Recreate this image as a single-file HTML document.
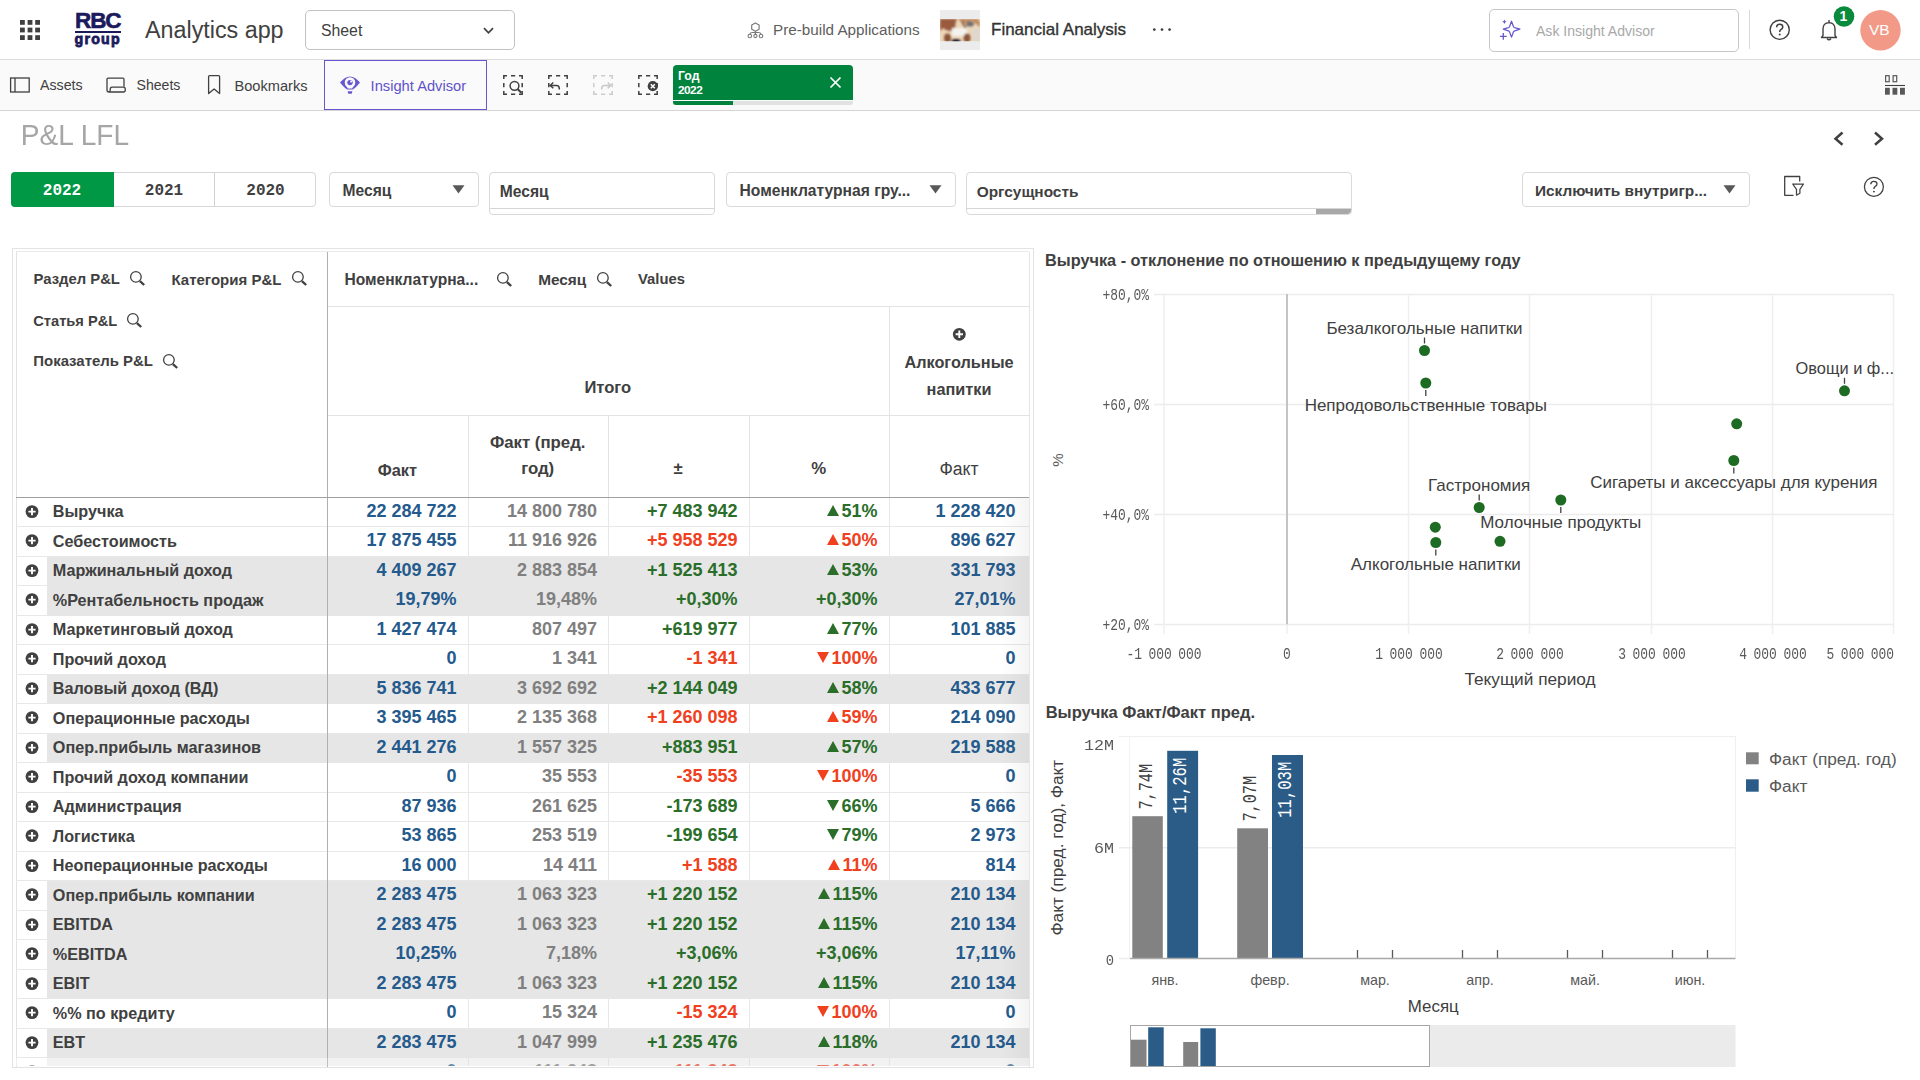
<!DOCTYPE html><html><head><meta charset="utf-8"><title>P&amp;L LFL</title><style>
*{margin:0;padding:0;box-sizing:border-box}
html,body{width:1920px;height:1080px;overflow:hidden;background:#fff;font-family:"Liberation Sans",sans-serif;color:#404040}
.ab{position:absolute}
.t{position:absolute;white-space:nowrap;line-height:1}
svg{position:absolute;overflow:visible}
.tu{display:inline-block;width:0;height:0;border-left:6px solid transparent;border-right:6px solid transparent;border-bottom:11.5px solid;margin-right:2.5px;vertical-align:1px}
.td{display:inline-block;width:0;height:0;border-left:6px solid transparent;border-right:6px solid transparent;border-top:11.5px solid;margin-right:2.5px;vertical-align:1px}
</style></head><body>
<div class="ab" style="left:0px;top:59px;width:1920px;height:1px;background:#dcdcdc"></div>
<svg style="left:0px;top:0px;" width="60" height="60" viewBox="0 0 60 60"><rect x="20.0" y="20.0" width="4.8" height="4.8" fill="#404040"/><rect x="27.6" y="20.0" width="4.8" height="4.8" fill="#404040"/><rect x="35.2" y="20.0" width="4.8" height="4.8" fill="#404040"/><rect x="20.0" y="27.6" width="4.8" height="4.8" fill="#404040"/><rect x="27.6" y="27.6" width="4.8" height="4.8" fill="#404040"/><rect x="35.2" y="27.6" width="4.8" height="4.8" fill="#404040"/><rect x="20.0" y="35.2" width="4.8" height="4.8" fill="#404040"/><rect x="27.6" y="35.2" width="4.8" height="4.8" fill="#404040"/><rect x="35.2" y="35.2" width="4.8" height="4.8" fill="#404040"/></svg>
<div class="t" style="left:75px;top:9.75px;font-size:22.5px;font-weight:bold;color:#1b1a5c;letter-spacing:-1.1px;-webkit-text-stroke:0.6px #1b1a5c">RBC</div>
<div class="ab" style="left:74.5px;top:31.2px;width:46.5px;height:1.7px;background:#1b1a5c"></div>
<div class="t" style="left:74.6px;top:31.98px;font-size:14.2px;font-weight:bold;color:#1b1a5c;letter-spacing:1.2px;-webkit-text-stroke:0.8px #1b1a5c">group</div>
<div class="t" style="left:145px;top:19.27px;font-size:23.3px;color:#404040">Analytics app</div>
<div class="ab" style="left:305px;top:10px;width:210px;height:40px;border:1px solid #c2c2c2;border-radius:5px;background:#fff"></div>
<div class="t" style="left:321px;top:22.52px;font-size:15.8px;color:#404040">Sheet</div>
<svg style="left:483px;top:27px;" width="12" height="8" viewBox="0 0 12 8"><path d="M1 1.2 L5.5 5.8 L10 1.2" fill="none" stroke="#404040" stroke-width="1.7"/></svg>
<svg style="left:742px;top:18px;" width="26" height="24" viewBox="0 0 26 24"><path d="M13.4 4.9 L17.1 7 V11.2 L13.4 13.3 L9.7 11.2 V7Z" fill="none" stroke="#7a7a7a" stroke-width="1.2" stroke-linejoin="round"/><path d="M13.4 13.3 V16.2 M7.8 16.3 Q8.3 14.5 10.3 14.5 H16.5 Q18.5 14.5 19 16.3" fill="none" stroke="#7a7a7a" stroke-width="1.2"/><circle cx="7.8" cy="18" r="1.75" fill="none" stroke="#7a7a7a" stroke-width="1.1"/><circle cx="13.4" cy="18" r="1.6" fill="none" stroke="#7a7a7a" stroke-width="1.1"/><circle cx="19" cy="18" r="1.75" fill="none" stroke="#7a7a7a" stroke-width="1.1"/></svg>
<div class="t" style="left:773px;top:21.89px;font-size:15.25px;color:#5e5e5e">Pre-build Applications</div>
<div class="ab" style="left:940px;top:10px;width:40px;height:40px;background:#ececec"></div>
<svg style="left:940px;top:18.7px;" width="40" height="22.2" viewBox="0 0 40 22.2"><defs><filter id="bl" x="-10%" y="-10%" width="120%" height="120%"><feGaussianBlur stdDeviation="0.9"/></filter><clipPath id="cp"><rect width="40" height="22.2"/></clipPath></defs><g clip-path="url(#cp)"><rect width="40" height="22.2" fill="#ecd6b8"/><g filter="url(#bl)"><path d="M0 0 H17 Q14 6 16 11 Q8 14 3 9 L0 12Z" fill="#9a5a3c"/><path d="M18 0 H38 L40 4 V8 Q36 5 32 2 Q26 6 21 3Z" fill="#c08a62"/><ellipse cx="30" cy="5" rx="4" ry="2.6" fill="#6e6e6e"/><rect x="12" y="9" width="15" height="8" fill="#f4f2ee"/><rect x="33" y="9" width="6" height="13" fill="#dcd7d2"/><ellipse cx="7.5" cy="19" rx="3.5" ry="4.5" fill="#8a5438"/><ellipse cx="27" cy="19" rx="3.5" ry="4.5" fill="#8a5438"/><ellipse cx="16" cy="22.5" rx="4.5" ry="2.4" fill="#1a1a2a"/><path d="M22 2 Q24 7 26 9" stroke="#8a5a40" stroke-width="2" fill="none"/></g></g></svg>
<div class="t" style="left:991px;top:21.31px;font-size:17px;color:#333;-webkit-text-stroke:0.35px #333">Financial Analysis</div>
<svg style="left:1150px;top:26px;" width="24" height="8" viewBox="0 0 24 8"><circle cx="4.3" cy="3.6" r="1.35" fill="#404040"/><circle cx="12" cy="3.6" r="1.35" fill="#404040"/><circle cx="19.6" cy="3.6" r="1.35" fill="#404040"/></svg>
<div class="ab" style="left:1489px;top:8.5px;width:250px;height:43px;border:1px solid #c6c6c6;border-radius:5px;background:#fff"></div>
<svg style="left:1500px;top:19px;" width="26" height="24" viewBox="0 0 26 24"><path d="M11.5 2.2 L13.5 7.7 Q13.9 8.4 14.7 8.7 L19.9 10.2 L14.7 11.8 Q13.9 12.1 13.5 12.8 L11.5 18.1 L9.5 12.8 Q9.1 12.1 8.3 11.8 L3.3 10.2 L8.3 8.7 Q9.1 8.4 9.5 7.7 Z" fill="none" stroke="#6657cf" stroke-width="1.25" stroke-linejoin="round"/><path d="M4.4 0.6 L5.1 2.1 L6.5 2.8 L5.1 3.5 L4.4 5 L3.7 3.5 L2.3 2.8 L3.7 2.1Z" fill="#6657cf"/><path d="M3.3 14 V20.8 M0 17.4 H6.7" stroke="#6657cf" stroke-width="1.3"/></svg>
<div class="t" style="left:1536px;top:24.10px;font-size:14.05px;color:#a8a8a8">Ask Insight Advisor</div>
<div class="ab" style="left:1749px;top:10px;width:1px;height:39px;background:#d9d9d9"></div>
<svg style="left:1768px;top:18px;" width="24" height="24" viewBox="0 0 24 24"><circle cx="11.7" cy="11.8" r="9.6" fill="none" stroke="#404040" stroke-width="1.4"/><path d="M8.6 9.3 Q8.6 6.2 11.7 6.2 Q14.8 6.2 14.8 8.9 Q14.8 10.6 12.8 11.6 Q11.7 12.2 11.7 14" fill="none" stroke="#404040" stroke-width="1.5"/><circle cx="11.7" cy="16.6" r="1" fill="#404040"/></svg>
<svg style="left:1819px;top:19px;" width="22" height="24" viewBox="0 0 22 24"><path d="M2.5 18.5 H17.5 L16 16.5 V10 Q16 4 10 3.6 Q4 4 4 10 V16.5 Z" fill="none" stroke="#404040" stroke-width="1.4" stroke-linejoin="round"/><path d="M10 1 V3.5" stroke="#404040" stroke-width="1.4"/><path d="M8 19.5 Q10 22 12 19.5" fill="none" stroke="#404040" stroke-width="1.4"/></svg>
<svg style="left:1833px;top:5.5px;" width="22" height="22" viewBox="0 0 22 22"><circle cx="11" cy="10.5" r="10.3" fill="#0a8a3c"/></svg>
<div class="t" style="left:1839.5px;top:9.15px;font-size:14px;color:#fff;font-weight:bold">1</div>
<svg style="left:1859.5px;top:9.5px;" width="41" height="41" viewBox="0 0 41 41"><circle cx="20.5" cy="20.3" r="20.2" fill="#f29a87"/></svg>
<div class="t" style="left:1869px;top:22.38px;font-size:15.5px;color:#fff">VB</div>
<div class="ab" style="left:0px;top:60px;width:1920px;height:50px;background:#fafafa"></div>
<div class="ab" style="left:0px;top:109.5px;width:1920px;height:1.2px;background:#d4d4d4"></div>
<svg style="left:9px;top:77px;" width="23" height="16" viewBox="0 0 23 16"><rect x="1.6" y="1" width="18.6" height="14" fill="none" stroke="#404040" stroke-width="1.3"/><path d="M6 1 V15" stroke="#404040" stroke-width="1.3"/></svg>
<div class="t" style="left:40px;top:77.73px;font-size:14.2px;color:#404040">Assets</div>
<svg style="left:105px;top:77px;" width="23" height="17" viewBox="0 0 23 17"><path d="M2 13 V2.5 Q2 1.2 3.3 1.2 H17.8 Q19 1.2 19 2.5 V9.5" fill="none" stroke="#404040" stroke-width="1.3"/><path d="M2 13 Q2 15 4 15 H18.5 Q20.3 15 20.3 12.8 Q20.3 10.2 18.5 10.2 H7 Q5.2 10.2 5.2 12.4 V13.2 Q5.2 15 3.5 15" fill="none" stroke="#404040" stroke-width="1.3"/></svg>
<div class="t" style="left:136.5px;top:77.81px;font-size:14.1px;color:#404040">Sheets</div>
<svg style="left:206px;top:74px;" width="16" height="22" viewBox="0 0 16 22"><path d="M2.6 2.6 Q2.6 1.6 3.6 1.6 H12.6 Q13.6 1.6 13.6 2.6 V19.6 L8.1 15 L2.6 19.6 Z" fill="none" stroke="#404040" stroke-width="1.3" stroke-linejoin="round"/></svg>
<div class="t" style="left:234.5px;top:78.64px;font-size:14.6px;color:#404040">Bookmarks</div>
<div class="ab" style="left:324px;top:60px;width:163px;height:50px;border:1.2px solid #6657cf;background:#fafafa"></div>
<svg style="left:338px;top:74px;" width="24" height="22" viewBox="0 0 24 22"><path d="M2 8.5 Q12 -3.5 22 8.5 Q17.5 14 14.8 15.6 H9.2 Q6.5 14 2 8.5Z" fill="#6657cf"/><circle cx="12" cy="8.6" r="5.3" fill="#fafafa"/><path d="M8.6 11.5 H15.4 L14.3 14.6 H9.7Z" fill="#fafafa"/><circle cx="12" cy="8.6" r="2.7" fill="#6657cf"/><circle cx="13.1" cy="7.6" r="1" fill="#fafafa"/><path d="M9.6 17.2 H14.4 L13.7 19.8 H10.3Z" fill="#6657cf"/></svg>
<div class="t" style="left:370.6px;top:78.75px;font-size:14.7px;color:#5f52c9">Insight Advisor</div>
<svg style="left:503px;top:75px;" width="22" height="22" viewBox="0 0 22 22"><path d="M0.8 4 V0.8 H4 M8 0.8 H12.2 M16 0.8 H19.2 V4 M19.2 8 V12.2 M19.2 16 V19.2 H16 M12.2 19.2 H8 M4 19.2 H0.8 V16 M0.8 12.2 V8" fill="none" stroke="#404040" stroke-width="1.5"/><circle cx="11.5" cy="10.8" r="4.4" fill="none" stroke="#404040" stroke-width="1.5"/><path d="M14.6 14 L18.3 17.7" stroke="#404040" stroke-width="2"/></svg>
<svg style="left:548px;top:75px;" width="22" height="22" viewBox="0 0 22 22"><path d="M0.8 4 V0.8 H4 M8 0.8 H12.2 M16 0.8 H19.2 V4 M19.2 8 V12.2 M19.2 16 V19.2 H16 M12.2 19.2 H8 M4 19.2 H0.8 V16 M0.8 12.2 V8" fill="none" stroke="#404040" stroke-width="1.5"/><path d="M5.3 7.5 L2.2 10.4 L5.3 13.3" fill="none" stroke="#404040" stroke-width="1.5"/><path d="M2.5 10.4 H8.5 Q11.3 10.4 11.3 13.5 V14.5" fill="none" stroke="#404040" stroke-width="1.5"/></svg>
<svg style="left:593px;top:75px;" width="22" height="22" viewBox="0 0 22 22"><path d="M0.8 4 V0.8 H4 M8 0.8 H12.2 M16 0.8 H19.2 V4 M19.2 8 V12.2 M19.2 16 V19.2 H16 M12.2 19.2 H8 M4 19.2 H0.8 V16 M0.8 12.2 V8" fill="none" stroke="#cccccc" stroke-width="1.5"/><path d="M14.7 7.5 L17.8 10.4 L14.7 13.3" fill="none" stroke="#c8c8c8" stroke-width="1.5"/><path d="M17.5 10.4 H11.5 Q8.7 10.4 8.7 13.5 V14.5" fill="none" stroke="#c8c8c8" stroke-width="1.5"/></svg>
<svg style="left:638px;top:75px;" width="22" height="22" viewBox="0 0 22 22"><path d="M0.8 4 V0.8 H4 M8 0.8 H12.2 M16 0.8 H19.2 V4 M19.2 8 V12.2 M19.2 16 V19.2 H16 M12.2 19.2 H8 M4 19.2 H0.8 V16 M0.8 12.2 V8" fill="none" stroke="#404040" stroke-width="1.5"/><circle cx="14.8" cy="11.2" r="5.1" fill="#404040"/><path d="M12.8 9.2 L16.8 13.2 M16.8 9.2 L12.8 13.2" stroke="#fff" stroke-width="1.5"/></svg>
<div class="ab" style="left:673px;top:65px;width:180px;height:35px;background:#00843d;border-radius:4px 4px 0 0"></div>
<div class="ab" style="left:673px;top:101px;width:180px;height:3.8px;background:#e2e2e2;border-radius:0 0 3px 3px"></div>
<div class="ab" style="left:673px;top:101px;width:60.2px;height:3.8px;background:#00843d;border-radius:0 0 0 3px"></div>
<div class="t" style="left:678px;top:70.39px;font-size:12.3px;font-weight:bold;color:#fff">Год</div>
<div class="t" style="left:678px;top:84.71px;font-size:11.8px;font-weight:bold;color:#fff;letter-spacing:-0.5px">2022</div>
<svg style="left:829px;top:76px;" width="14" height="14" viewBox="0 0 14 14"><path d="M1.5 1.5 L11.5 11.5 M11.5 1.5 L1.5 11.5" stroke="#fff" stroke-width="1.7"/></svg>
<svg style="left:1884px;top:74px;" width="22" height="22" viewBox="0 0 22 22"><rect x="1.6" y="1.7" width="3.6" height="6" fill="none" stroke="#595959" stroke-width="1.2"/><rect x="9.1" y="1.7" width="3.6" height="6" fill="none" stroke="#595959" stroke-width="1.2"/><path d="M1 11.5 H21" stroke="#404040" stroke-width="1.1"/><rect x="1" y="13.8" width="4.8" height="6.9" fill="#595959"/><rect x="8.5" y="13.8" width="4.8" height="6.9" fill="#595959"/><rect x="16" y="13.8" width="4.9" height="6.9" fill="#595959"/></svg>
<div class="t" style="left:20.8px;top:122.11px;font-size:28.1px;color:#a6a6a6;transform:scaleY(1.08);transform-origin:0 23.8px">P&amp;L LFL</div>
<svg style="left:1830px;top:128px;" width="16" height="20" viewBox="0 0 16 20"><path d="M12.5 4.5 L5.5 10.7 L12.5 16.8" fill="none" stroke="#404040" stroke-width="2.5"/></svg>
<svg style="left:1870px;top:128px;" width="16" height="20" viewBox="0 0 16 20"><path d="M5 4.5 L12 10.7 L5 16.8" fill="none" stroke="#404040" stroke-width="2.5"/></svg>
<div class="ab" style="left:11px;top:172px;width:305px;height:35px;border:1px solid #d6d6d6;border-radius:4px;background:#fff"></div>
<div class="ab" style="left:11px;top:172px;width:103px;height:35px;background:#009845;border-radius:4px 0 0 4px"></div>
<div class="ab" style="left:214px;top:173px;width:1px;height:33px;background:#d0d0d0"></div>
<div class="t" style="left:12px;top:182.94px;width:100px;text-align:center;font-size:16px;font-family:'Liberation Mono';font-weight:bold;color:#fff">2022</div>
<div class="t" style="left:114px;top:182.94px;width:100px;text-align:center;font-size:16px;font-family:'Liberation Mono';font-weight:bold;color:#404040">2021</div>
<div class="t" style="left:215.5px;top:182.94px;width:100px;text-align:center;font-size:16px;font-family:'Liberation Mono';font-weight:bold;color:#404040">2020</div>
<div class="ab" style="left:329px;top:172px;width:150px;height:35px;border:1px solid #d9d9d9;border-radius:4px;background:#fff"></div>
<div class="t" style="left:342.5px;top:182.79px;font-size:15.6px;font-weight:bold;color:#404040">Месяц</div>
<svg style="left:452px;top:185px;" width="14" height="10" viewBox="0 0 14 10"><path d="M0.5 0.3 H12.5 L6.5 8.6Z" fill="#595959"/></svg>
<div class="ab" style="left:489px;top:172px;width:226px;height:43px;border:1px solid #d9d9d9;border-radius:4px;background:#fff"></div>
<div class="ab" style="left:490px;top:207.5px;width:224px;height:1.2px;background:#d6d6d6"></div>
<div class="t" style="left:499.8px;top:183.79px;font-size:15.6px;font-weight:bold;color:#404040">Месяц</div>
<div class="ab" style="left:726px;top:172px;width:230px;height:35px;border:1px solid #d9d9d9;border-radius:4px;background:#fff"></div>
<div class="t" style="left:739.5px;top:182.75px;font-size:15.65px;font-weight:bold;color:#404040">Номенклатурная гру...</div>
<svg style="left:929px;top:185px;" width="14" height="10" viewBox="0 0 14 10"><path d="M0.5 0.3 H12.5 L6.5 8.6Z" fill="#595959"/></svg>
<div class="ab" style="left:966px;top:172px;width:386px;height:43px;border:1px solid #d9d9d9;border-radius:4px;background:#fff"></div>
<div class="ab" style="left:967px;top:207.5px;width:384px;height:1.2px;background:#d6d6d6"></div>
<div class="ab" style="left:1316px;top:208.5px;width:35px;height:5.5px;background:#a8a8a8;border-radius:0 0 4px 0"></div>
<div class="t" style="left:976.7px;top:183.96px;font-size:15.4px;font-weight:bold;color:#404040">Оргсущность</div>
<div class="ab" style="left:1521.5px;top:172px;width:228px;height:35px;border:1px solid #d9d9d9;border-radius:4px;background:#fff"></div>
<div class="t" style="left:1535.0px;top:182.96px;font-size:15.4px;font-weight:bold;color:#404040">Исключить внутригр...</div>
<svg style="left:1722.5px;top:185px;" width="14" height="10" viewBox="0 0 14 10"><path d="M0.5 0.3 H12.5 L6.5 8.6Z" fill="#595959"/></svg>
<svg style="left:1782px;top:175px;" width="26" height="24" viewBox="0 0 26 24"><path d="M11.5 20.3 H2.7 V1.5 H17.7 V6.5" fill="none" stroke="#404040" stroke-width="1.3" stroke-linejoin="round"/><path d="M10.7 9 H21.5 L17.9 14.3 V18.2 L14.5 20.2 V14.3 Z" fill="none" stroke="#404040" stroke-width="1.25" stroke-linejoin="round"/></svg>
<svg style="left:1862px;top:175px;" width="24" height="24" viewBox="0 0 24 24"><circle cx="11.9" cy="11.8" r="9.5" fill="none" stroke="#404040" stroke-width="1.25"/><path d="M8.8 9.3 Q8.8 6.3 11.9 6.3 Q15 6.3 15 9 Q15 10.6 13 11.6 Q11.9 12.2 11.9 14" fill="none" stroke="#404040" stroke-width="1.35"/><circle cx="11.9" cy="16.6" r="0.95" fill="#404040"/></svg>
<div class="ab" style="left:12px;top:248px;width:1022px;height:820px;border:1px solid #e3e3e3;background:#fff"></div>
<div class="ab" style="left:16px;top:251px;width:1013px;height:1px;background:#ebebeb"></div>
<div class="ab" style="left:16px;top:252px;width:1px;height:815px;background:#e3e3e3"></div>
<div class="ab" style="left:1029px;top:252px;width:1px;height:815px;background:#e6e6e6"></div>
<div class="ab" style="left:327px;top:306px;width:702px;height:1px;background:#e3e3e3"></div>
<div class="ab" style="left:327px;top:415px;width:702px;height:1px;background:#e3e3e3"></div>
<div class="ab" style="left:327px;top:252px;width:1px;height:815px;background:#b0b0b0"></div>
<div class="ab" style="left:16px;top:497px;width:1013px;height:1.2px;background:#a0a0a0"></div>
<div class="ab" style="left:467.5px;top:416px;width:1px;height:81px;background:#e3e3e3"></div>
<div class="ab" style="left:608px;top:416px;width:1px;height:81px;background:#e3e3e3"></div>
<div class="ab" style="left:748.5px;top:416px;width:1px;height:81px;background:#e3e3e3"></div>
<div class="ab" style="left:888.5px;top:416px;width:1px;height:81px;background:#e3e3e3"></div>
<div class="ab" style="left:888.5px;top:307px;width:1px;height:108px;background:#e3e3e3"></div>
<div class="t" style="left:33.5px;top:272.23px;font-size:14.85px;font-weight:bold;color:#404040">Раздел P&amp;L</div>
<svg style="left:129px;top:270.2px;" width="18" height="18" viewBox="0 0 18 18"><circle cx="6.9" cy="6.9" r="5.3" fill="none" stroke="#404040" stroke-width="1.3"/><path d="M10.9 11.1 L15.2 15" stroke="#404040" stroke-width="2.3"/></svg>
<div class="t" style="left:171.5px;top:272.10px;font-size:15.0px;font-weight:bold;color:#404040">Категория P&amp;L</div>
<svg style="left:291px;top:270.2px;" width="18" height="18" viewBox="0 0 18 18"><circle cx="6.9" cy="6.9" r="5.3" fill="none" stroke="#404040" stroke-width="1.3"/><path d="M10.9 11.1 L15.2 15" stroke="#404040" stroke-width="2.3"/></svg>
<div class="t" style="left:33.3px;top:313.80px;font-size:14.65px;font-weight:bold;color:#404040">Статья P&amp;L</div>
<svg style="left:126.4px;top:311.6px;" width="18" height="18" viewBox="0 0 18 18"><circle cx="6.9" cy="6.9" r="5.3" fill="none" stroke="#404040" stroke-width="1.3"/><path d="M10.9 11.1 L15.2 15" stroke="#404040" stroke-width="2.3"/></svg>
<div class="t" style="left:33.3px;top:354.14px;font-size:14.95px;font-weight:bold;color:#404040">Показатель P&amp;L</div>
<svg style="left:162.4px;top:352.8px;" width="18" height="18" viewBox="0 0 18 18"><circle cx="6.9" cy="6.9" r="5.3" fill="none" stroke="#404040" stroke-width="1.3"/><path d="M10.9 11.1 L15.2 15" stroke="#404040" stroke-width="2.3"/></svg>
<div class="t" style="left:344.4px;top:271.79px;font-size:15.6px;font-weight:bold;color:#404040">Номенклатурна...</div>
<svg style="left:496px;top:270.9px;" width="18" height="18" viewBox="0 0 18 18"><circle cx="6.9" cy="6.9" r="5.3" fill="none" stroke="#404040" stroke-width="1.3"/><path d="M10.9 11.1 L15.2 15" stroke="#404040" stroke-width="2.3"/></svg>
<div class="t" style="left:538.2px;top:272.00px;font-size:15.35px;font-weight:bold;color:#404040">Месяц</div>
<svg style="left:595.7px;top:270.9px;" width="18" height="18" viewBox="0 0 18 18"><circle cx="6.9" cy="6.9" r="5.3" fill="none" stroke="#404040" stroke-width="1.3"/><path d="M10.9 11.1 L15.2 15" stroke="#404040" stroke-width="2.3"/></svg>
<div class="t" style="left:638px;top:272.47px;font-size:14.8px;font-weight:bold;color:#404040">Values</div>
<div class="t" style="left:527.8px;top:380.44px;width:160px;text-align:center;font-size:16.6px;font-weight:bold;color:#404040">Итого</div>
<svg style="left:951px;top:326px;" width="17" height="17" viewBox="0 0 17 17"><circle cx="8.3" cy="8.3" r="6.4" fill="#404040"/><path d="M8.3 4.6 V12 M4.6 8.3 H12" stroke="#fff" stroke-width="1.9"/></svg>
<div class="t" style="left:879.0px;top:353.70px;width:160px;text-align:center;font-size:16.3px;font-weight:bold;color:#404040">Алкогольные</div>
<div class="t" style="left:879.0px;top:380.70px;width:160px;text-align:center;font-size:16.3px;font-weight:bold;color:#404040">напитки</div>
<div class="t" style="left:317.4px;top:461.61px;width:160px;text-align:center;font-size:16.4px;font-weight:bold;color:#404040">Факт</div>
<div class="t" style="left:457.70000000000005px;top:434.58px;width:160px;text-align:center;font-size:16.8px;font-weight:bold;color:#404040">Факт (пред.</div>
<div class="t" style="left:457.70000000000005px;top:461.28px;width:160px;text-align:center;font-size:16.8px;font-weight:bold;color:#404040">год)</div>
<div class="t" style="left:598.0px;top:461.28px;width:160px;text-align:center;font-size:16.8px;font-weight:bold;color:#404040">±</div>
<div class="t" style="left:738.7px;top:461.28px;width:160px;text-align:center;font-size:16.8px;font-weight:bold;color:#404040">%</div>
<div class="t" style="left:879.0px;top:460.60px;width:160px;text-align:center;font-size:17.6px;color:#404040">Факт</div>
<div class="ab" style="left:16px;top:497.5px;width:1013px;height:568px;overflow:hidden">
<div class="ab" style="left:0px;top:28.5px;width:1013px;height:1px;background:#e8e8e8"></div>
<div class="ab" style="left:451.5px;top:0.0px;width:1px;height:29.5px;background:#e8e8e8"></div>
<div class="ab" style="left:592px;top:0.0px;width:1px;height:29.5px;background:#e8e8e8"></div>
<div class="ab" style="left:732.5px;top:0.0px;width:1px;height:29.5px;background:#e8e8e8"></div>
<div class="ab" style="left:872.5px;top:0.0px;width:1px;height:29.5px;background:#e8e8e8"></div>
<div class="ab" style="left:311px;top:0.0px;width:1px;height:29.5px;background:#b0b0b0"></div>
<svg style="left:8.5px;top:7.0px;" width="14" height="14" viewBox="0 0 14 14"><circle cx="7" cy="6.6" r="6.4" fill="#404040"/><path d="M7 3 V10.2 M3.4 6.6 H10.6" stroke="#fff" stroke-width="1.9"/></svg>
<div class="t" style="left:36.8px;top:5.68px;font-size:16.2px;font-weight:bold;color:#404040">Выручка</div>
<div class="t" style="left:310.5px;top:4.16px;width:130px;text-align:right;font-size:18px;font-weight:bold;color:#245a8c">22 284 722</div>
<div class="t" style="left:451px;top:4.16px;width:130px;text-align:right;font-size:18px;font-weight:bold;color:#7f7f7f">14 800 780</div>
<div class="t" style="left:591.5px;top:4.16px;width:130px;text-align:right;font-size:18px;font-weight:bold;color:#2a6e2a">+7 483 942</div>
<div class="t" style="left:731.5px;top:4.16px;width:130px;text-align:right;font-size:18px;font-weight:bold;color:#2a6e2a"><i class="tu" style="border-bottom-color:#2a6e2a"></i>51%</div>
<div class="t" style="left:869.5px;top:4.16px;width:130px;text-align:right;font-size:18px;font-weight:bold;color:#245a8c">1 228 420</div>
<div class="ab" style="left:0px;top:58.0px;width:1013px;height:1px;background:#e8e8e8"></div>
<div class="ab" style="left:451.5px;top:29.5px;width:1px;height:29.5px;background:#e8e8e8"></div>
<div class="ab" style="left:592px;top:29.5px;width:1px;height:29.5px;background:#e8e8e8"></div>
<div class="ab" style="left:732.5px;top:29.5px;width:1px;height:29.5px;background:#e8e8e8"></div>
<div class="ab" style="left:872.5px;top:29.5px;width:1px;height:29.5px;background:#e8e8e8"></div>
<div class="ab" style="left:311px;top:29.5px;width:1px;height:29.5px;background:#b0b0b0"></div>
<svg style="left:8.5px;top:36.5px;" width="14" height="14" viewBox="0 0 14 14"><circle cx="7" cy="6.6" r="6.4" fill="#404040"/><path d="M7 3 V10.2 M3.4 6.6 H10.6" stroke="#fff" stroke-width="1.9"/></svg>
<div class="t" style="left:36.8px;top:35.18px;font-size:16.2px;font-weight:bold;color:#404040">Себестоимость</div>
<div class="t" style="left:310.5px;top:33.66px;width:130px;text-align:right;font-size:18px;font-weight:bold;color:#245a8c">17 875 455</div>
<div class="t" style="left:451px;top:33.66px;width:130px;text-align:right;font-size:18px;font-weight:bold;color:#7f7f7f">11 916 926</div>
<div class="t" style="left:591.5px;top:33.66px;width:130px;text-align:right;font-size:18px;font-weight:bold;color:#f0401e">+5 958 529</div>
<div class="t" style="left:731.5px;top:33.66px;width:130px;text-align:right;font-size:18px;font-weight:bold;color:#f0401e"><i class="tu" style="border-bottom-color:#f0401e"></i>50%</div>
<div class="t" style="left:869.5px;top:33.66px;width:130px;text-align:right;font-size:18px;font-weight:bold;color:#245a8c">896 627</div>
<div class="ab" style="left:31px;top:59.0px;width:982px;height:29.5px;background:#e6e6e6"></div>
<div class="ab" style="left:0px;top:87.5px;width:31px;height:1px;background:#e8e8e8"></div>
<div class="ab" style="left:311px;top:59.0px;width:1px;height:29.5px;background:#b0b0b0"></div>
<svg style="left:8.5px;top:66.0px;" width="14" height="14" viewBox="0 0 14 14"><circle cx="7" cy="6.6" r="6.4" fill="#404040"/><path d="M7 3 V10.2 M3.4 6.6 H10.6" stroke="#fff" stroke-width="1.9"/></svg>
<div class="t" style="left:36.8px;top:64.68px;font-size:16.2px;font-weight:bold;color:#404040">Маржинальный доход</div>
<div class="t" style="left:310.5px;top:63.16px;width:130px;text-align:right;font-size:18px;font-weight:bold;color:#245a8c">4 409 267</div>
<div class="t" style="left:451px;top:63.16px;width:130px;text-align:right;font-size:18px;font-weight:bold;color:#7f7f7f">2 883 854</div>
<div class="t" style="left:591.5px;top:63.16px;width:130px;text-align:right;font-size:18px;font-weight:bold;color:#2a6e2a">+1 525 413</div>
<div class="t" style="left:731.5px;top:63.16px;width:130px;text-align:right;font-size:18px;font-weight:bold;color:#2a6e2a"><i class="tu" style="border-bottom-color:#2a6e2a"></i>53%</div>
<div class="t" style="left:869.5px;top:63.16px;width:130px;text-align:right;font-size:18px;font-weight:bold;color:#245a8c">331 793</div>
<div class="ab" style="left:31px;top:88.5px;width:982px;height:29.5px;background:#e6e6e6"></div>
<div class="ab" style="left:0px;top:117.0px;width:31px;height:1px;background:#e8e8e8"></div>
<div class="ab" style="left:311px;top:88.5px;width:1px;height:29.5px;background:#b0b0b0"></div>
<svg style="left:8.5px;top:95.5px;" width="14" height="14" viewBox="0 0 14 14"><circle cx="7" cy="6.6" r="6.4" fill="#404040"/><path d="M7 3 V10.2 M3.4 6.6 H10.6" stroke="#fff" stroke-width="1.9"/></svg>
<div class="t" style="left:36.8px;top:94.18px;font-size:16.2px;font-weight:bold;color:#404040">%Рентабельность продаж</div>
<div class="t" style="left:310.5px;top:92.66px;width:130px;text-align:right;font-size:18px;font-weight:bold;color:#245a8c">19,79%</div>
<div class="t" style="left:451px;top:92.66px;width:130px;text-align:right;font-size:18px;font-weight:bold;color:#7f7f7f">19,48%</div>
<div class="t" style="left:591.5px;top:92.66px;width:130px;text-align:right;font-size:18px;font-weight:bold;color:#2a6e2a">+0,30%</div>
<div class="t" style="left:731.5px;top:92.66px;width:130px;text-align:right;font-size:18px;font-weight:bold;color:#2a6e2a">+0,30%</div>
<div class="t" style="left:869.5px;top:92.66px;width:130px;text-align:right;font-size:18px;font-weight:bold;color:#245a8c">27,01%</div>
<div class="ab" style="left:0px;top:146.5px;width:1013px;height:1px;background:#e8e8e8"></div>
<div class="ab" style="left:451.5px;top:118.0px;width:1px;height:29.5px;background:#e8e8e8"></div>
<div class="ab" style="left:592px;top:118.0px;width:1px;height:29.5px;background:#e8e8e8"></div>
<div class="ab" style="left:732.5px;top:118.0px;width:1px;height:29.5px;background:#e8e8e8"></div>
<div class="ab" style="left:872.5px;top:118.0px;width:1px;height:29.5px;background:#e8e8e8"></div>
<div class="ab" style="left:311px;top:118.0px;width:1px;height:29.5px;background:#b0b0b0"></div>
<svg style="left:8.5px;top:125.0px;" width="14" height="14" viewBox="0 0 14 14"><circle cx="7" cy="6.6" r="6.4" fill="#404040"/><path d="M7 3 V10.2 M3.4 6.6 H10.6" stroke="#fff" stroke-width="1.9"/></svg>
<div class="t" style="left:36.8px;top:123.68px;font-size:16.2px;font-weight:bold;color:#404040">Маркетинговый доход</div>
<div class="t" style="left:310.5px;top:122.16px;width:130px;text-align:right;font-size:18px;font-weight:bold;color:#245a8c">1 427 474</div>
<div class="t" style="left:451px;top:122.16px;width:130px;text-align:right;font-size:18px;font-weight:bold;color:#7f7f7f">807 497</div>
<div class="t" style="left:591.5px;top:122.16px;width:130px;text-align:right;font-size:18px;font-weight:bold;color:#2a6e2a">+619 977</div>
<div class="t" style="left:731.5px;top:122.16px;width:130px;text-align:right;font-size:18px;font-weight:bold;color:#2a6e2a"><i class="tu" style="border-bottom-color:#2a6e2a"></i>77%</div>
<div class="t" style="left:869.5px;top:122.16px;width:130px;text-align:right;font-size:18px;font-weight:bold;color:#245a8c">101 885</div>
<div class="ab" style="left:0px;top:176.0px;width:1013px;height:1px;background:#e8e8e8"></div>
<div class="ab" style="left:451.5px;top:147.5px;width:1px;height:29.5px;background:#e8e8e8"></div>
<div class="ab" style="left:592px;top:147.5px;width:1px;height:29.5px;background:#e8e8e8"></div>
<div class="ab" style="left:732.5px;top:147.5px;width:1px;height:29.5px;background:#e8e8e8"></div>
<div class="ab" style="left:872.5px;top:147.5px;width:1px;height:29.5px;background:#e8e8e8"></div>
<div class="ab" style="left:311px;top:147.5px;width:1px;height:29.5px;background:#b0b0b0"></div>
<svg style="left:8.5px;top:154.5px;" width="14" height="14" viewBox="0 0 14 14"><circle cx="7" cy="6.6" r="6.4" fill="#404040"/><path d="M7 3 V10.2 M3.4 6.6 H10.6" stroke="#fff" stroke-width="1.9"/></svg>
<div class="t" style="left:36.8px;top:153.18px;font-size:16.2px;font-weight:bold;color:#404040">Прочий доход</div>
<div class="t" style="left:310.5px;top:151.66px;width:130px;text-align:right;font-size:18px;font-weight:bold;color:#245a8c">0</div>
<div class="t" style="left:451px;top:151.66px;width:130px;text-align:right;font-size:18px;font-weight:bold;color:#7f7f7f">1 341</div>
<div class="t" style="left:591.5px;top:151.66px;width:130px;text-align:right;font-size:18px;font-weight:bold;color:#f0401e">-1 341</div>
<div class="t" style="left:731.5px;top:151.66px;width:130px;text-align:right;font-size:18px;font-weight:bold;color:#f0401e"><i class="td" style="border-top-color:#f0401e"></i>100%</div>
<div class="t" style="left:869.5px;top:151.66px;width:130px;text-align:right;font-size:18px;font-weight:bold;color:#245a8c">0</div>
<div class="ab" style="left:31px;top:177.0px;width:982px;height:29.5px;background:#e6e6e6"></div>
<div class="ab" style="left:0px;top:205.5px;width:31px;height:1px;background:#e8e8e8"></div>
<div class="ab" style="left:311px;top:177.0px;width:1px;height:29.5px;background:#b0b0b0"></div>
<svg style="left:8.5px;top:184.0px;" width="14" height="14" viewBox="0 0 14 14"><circle cx="7" cy="6.6" r="6.4" fill="#404040"/><path d="M7 3 V10.2 M3.4 6.6 H10.6" stroke="#fff" stroke-width="1.9"/></svg>
<div class="t" style="left:36.8px;top:182.68px;font-size:16.2px;font-weight:bold;color:#404040">Валовый доход (ВД)</div>
<div class="t" style="left:310.5px;top:181.16px;width:130px;text-align:right;font-size:18px;font-weight:bold;color:#245a8c">5 836 741</div>
<div class="t" style="left:451px;top:181.16px;width:130px;text-align:right;font-size:18px;font-weight:bold;color:#7f7f7f">3 692 692</div>
<div class="t" style="left:591.5px;top:181.16px;width:130px;text-align:right;font-size:18px;font-weight:bold;color:#2a6e2a">+2 144 049</div>
<div class="t" style="left:731.5px;top:181.16px;width:130px;text-align:right;font-size:18px;font-weight:bold;color:#2a6e2a"><i class="tu" style="border-bottom-color:#2a6e2a"></i>58%</div>
<div class="t" style="left:869.5px;top:181.16px;width:130px;text-align:right;font-size:18px;font-weight:bold;color:#245a8c">433 677</div>
<div class="ab" style="left:0px;top:235.0px;width:1013px;height:1px;background:#e8e8e8"></div>
<div class="ab" style="left:451.5px;top:206.5px;width:1px;height:29.5px;background:#e8e8e8"></div>
<div class="ab" style="left:592px;top:206.5px;width:1px;height:29.5px;background:#e8e8e8"></div>
<div class="ab" style="left:732.5px;top:206.5px;width:1px;height:29.5px;background:#e8e8e8"></div>
<div class="ab" style="left:872.5px;top:206.5px;width:1px;height:29.5px;background:#e8e8e8"></div>
<div class="ab" style="left:311px;top:206.5px;width:1px;height:29.5px;background:#b0b0b0"></div>
<svg style="left:8.5px;top:213.5px;" width="14" height="14" viewBox="0 0 14 14"><circle cx="7" cy="6.6" r="6.4" fill="#404040"/><path d="M7 3 V10.2 M3.4 6.6 H10.6" stroke="#fff" stroke-width="1.9"/></svg>
<div class="t" style="left:36.8px;top:212.18px;font-size:16.2px;font-weight:bold;color:#404040">Операционные расходы</div>
<div class="t" style="left:310.5px;top:210.66px;width:130px;text-align:right;font-size:18px;font-weight:bold;color:#245a8c">3 395 465</div>
<div class="t" style="left:451px;top:210.66px;width:130px;text-align:right;font-size:18px;font-weight:bold;color:#7f7f7f">2 135 368</div>
<div class="t" style="left:591.5px;top:210.66px;width:130px;text-align:right;font-size:18px;font-weight:bold;color:#f0401e">+1 260 098</div>
<div class="t" style="left:731.5px;top:210.66px;width:130px;text-align:right;font-size:18px;font-weight:bold;color:#f0401e"><i class="tu" style="border-bottom-color:#f0401e"></i>59%</div>
<div class="t" style="left:869.5px;top:210.66px;width:130px;text-align:right;font-size:18px;font-weight:bold;color:#245a8c">214 090</div>
<div class="ab" style="left:31px;top:236.0px;width:982px;height:29.5px;background:#e6e6e6"></div>
<div class="ab" style="left:0px;top:264.5px;width:31px;height:1px;background:#e8e8e8"></div>
<div class="ab" style="left:311px;top:236.0px;width:1px;height:29.5px;background:#b0b0b0"></div>
<svg style="left:8.5px;top:243.0px;" width="14" height="14" viewBox="0 0 14 14"><circle cx="7" cy="6.6" r="6.4" fill="#404040"/><path d="M7 3 V10.2 M3.4 6.6 H10.6" stroke="#fff" stroke-width="1.9"/></svg>
<div class="t" style="left:36.8px;top:241.68px;font-size:16.2px;font-weight:bold;color:#404040">Опер.прибыль магазинов</div>
<div class="t" style="left:310.5px;top:240.16px;width:130px;text-align:right;font-size:18px;font-weight:bold;color:#245a8c">2 441 276</div>
<div class="t" style="left:451px;top:240.16px;width:130px;text-align:right;font-size:18px;font-weight:bold;color:#7f7f7f">1 557 325</div>
<div class="t" style="left:591.5px;top:240.16px;width:130px;text-align:right;font-size:18px;font-weight:bold;color:#2a6e2a">+883 951</div>
<div class="t" style="left:731.5px;top:240.16px;width:130px;text-align:right;font-size:18px;font-weight:bold;color:#2a6e2a"><i class="tu" style="border-bottom-color:#2a6e2a"></i>57%</div>
<div class="t" style="left:869.5px;top:240.16px;width:130px;text-align:right;font-size:18px;font-weight:bold;color:#245a8c">219 588</div>
<div class="ab" style="left:0px;top:294.0px;width:1013px;height:1px;background:#e8e8e8"></div>
<div class="ab" style="left:451.5px;top:265.5px;width:1px;height:29.5px;background:#e8e8e8"></div>
<div class="ab" style="left:592px;top:265.5px;width:1px;height:29.5px;background:#e8e8e8"></div>
<div class="ab" style="left:732.5px;top:265.5px;width:1px;height:29.5px;background:#e8e8e8"></div>
<div class="ab" style="left:872.5px;top:265.5px;width:1px;height:29.5px;background:#e8e8e8"></div>
<div class="ab" style="left:311px;top:265.5px;width:1px;height:29.5px;background:#b0b0b0"></div>
<svg style="left:8.5px;top:272.5px;" width="14" height="14" viewBox="0 0 14 14"><circle cx="7" cy="6.6" r="6.4" fill="#404040"/><path d="M7 3 V10.2 M3.4 6.6 H10.6" stroke="#fff" stroke-width="1.9"/></svg>
<div class="t" style="left:36.8px;top:271.18px;font-size:16.2px;font-weight:bold;color:#404040">Прочий доход компании</div>
<div class="t" style="left:310.5px;top:269.66px;width:130px;text-align:right;font-size:18px;font-weight:bold;color:#245a8c">0</div>
<div class="t" style="left:451px;top:269.66px;width:130px;text-align:right;font-size:18px;font-weight:bold;color:#7f7f7f">35 553</div>
<div class="t" style="left:591.5px;top:269.66px;width:130px;text-align:right;font-size:18px;font-weight:bold;color:#f0401e">-35 553</div>
<div class="t" style="left:731.5px;top:269.66px;width:130px;text-align:right;font-size:18px;font-weight:bold;color:#f0401e"><i class="td" style="border-top-color:#f0401e"></i>100%</div>
<div class="t" style="left:869.5px;top:269.66px;width:130px;text-align:right;font-size:18px;font-weight:bold;color:#245a8c">0</div>
<div class="ab" style="left:0px;top:323.5px;width:1013px;height:1px;background:#e8e8e8"></div>
<div class="ab" style="left:451.5px;top:295.0px;width:1px;height:29.5px;background:#e8e8e8"></div>
<div class="ab" style="left:592px;top:295.0px;width:1px;height:29.5px;background:#e8e8e8"></div>
<div class="ab" style="left:732.5px;top:295.0px;width:1px;height:29.5px;background:#e8e8e8"></div>
<div class="ab" style="left:872.5px;top:295.0px;width:1px;height:29.5px;background:#e8e8e8"></div>
<div class="ab" style="left:311px;top:295.0px;width:1px;height:29.5px;background:#b0b0b0"></div>
<svg style="left:8.5px;top:302.0px;" width="14" height="14" viewBox="0 0 14 14"><circle cx="7" cy="6.6" r="6.4" fill="#404040"/><path d="M7 3 V10.2 M3.4 6.6 H10.6" stroke="#fff" stroke-width="1.9"/></svg>
<div class="t" style="left:36.8px;top:300.68px;font-size:16.2px;font-weight:bold;color:#404040">Администрация</div>
<div class="t" style="left:310.5px;top:299.16px;width:130px;text-align:right;font-size:18px;font-weight:bold;color:#245a8c">87 936</div>
<div class="t" style="left:451px;top:299.16px;width:130px;text-align:right;font-size:18px;font-weight:bold;color:#7f7f7f">261 625</div>
<div class="t" style="left:591.5px;top:299.16px;width:130px;text-align:right;font-size:18px;font-weight:bold;color:#2a6e2a">-173 689</div>
<div class="t" style="left:731.5px;top:299.16px;width:130px;text-align:right;font-size:18px;font-weight:bold;color:#2a6e2a"><i class="td" style="border-top-color:#2a6e2a"></i>66%</div>
<div class="t" style="left:869.5px;top:299.16px;width:130px;text-align:right;font-size:18px;font-weight:bold;color:#245a8c">5 666</div>
<div class="ab" style="left:0px;top:353.0px;width:1013px;height:1px;background:#e8e8e8"></div>
<div class="ab" style="left:451.5px;top:324.5px;width:1px;height:29.5px;background:#e8e8e8"></div>
<div class="ab" style="left:592px;top:324.5px;width:1px;height:29.5px;background:#e8e8e8"></div>
<div class="ab" style="left:732.5px;top:324.5px;width:1px;height:29.5px;background:#e8e8e8"></div>
<div class="ab" style="left:872.5px;top:324.5px;width:1px;height:29.5px;background:#e8e8e8"></div>
<div class="ab" style="left:311px;top:324.5px;width:1px;height:29.5px;background:#b0b0b0"></div>
<svg style="left:8.5px;top:331.5px;" width="14" height="14" viewBox="0 0 14 14"><circle cx="7" cy="6.6" r="6.4" fill="#404040"/><path d="M7 3 V10.2 M3.4 6.6 H10.6" stroke="#fff" stroke-width="1.9"/></svg>
<div class="t" style="left:36.8px;top:330.18px;font-size:16.2px;font-weight:bold;color:#404040">Логистика</div>
<div class="t" style="left:310.5px;top:328.66px;width:130px;text-align:right;font-size:18px;font-weight:bold;color:#245a8c">53 865</div>
<div class="t" style="left:451px;top:328.66px;width:130px;text-align:right;font-size:18px;font-weight:bold;color:#7f7f7f">253 519</div>
<div class="t" style="left:591.5px;top:328.66px;width:130px;text-align:right;font-size:18px;font-weight:bold;color:#2a6e2a">-199 654</div>
<div class="t" style="left:731.5px;top:328.66px;width:130px;text-align:right;font-size:18px;font-weight:bold;color:#2a6e2a"><i class="td" style="border-top-color:#2a6e2a"></i>79%</div>
<div class="t" style="left:869.5px;top:328.66px;width:130px;text-align:right;font-size:18px;font-weight:bold;color:#245a8c">2 973</div>
<div class="ab" style="left:0px;top:382.5px;width:1013px;height:1px;background:#e8e8e8"></div>
<div class="ab" style="left:451.5px;top:354.0px;width:1px;height:29.5px;background:#e8e8e8"></div>
<div class="ab" style="left:592px;top:354.0px;width:1px;height:29.5px;background:#e8e8e8"></div>
<div class="ab" style="left:732.5px;top:354.0px;width:1px;height:29.5px;background:#e8e8e8"></div>
<div class="ab" style="left:872.5px;top:354.0px;width:1px;height:29.5px;background:#e8e8e8"></div>
<div class="ab" style="left:311px;top:354.0px;width:1px;height:29.5px;background:#b0b0b0"></div>
<svg style="left:8.5px;top:361.0px;" width="14" height="14" viewBox="0 0 14 14"><circle cx="7" cy="6.6" r="6.4" fill="#404040"/><path d="M7 3 V10.2 M3.4 6.6 H10.6" stroke="#fff" stroke-width="1.9"/></svg>
<div class="t" style="left:36.8px;top:359.68px;font-size:16.2px;font-weight:bold;color:#404040">Неоперационные расходы</div>
<div class="t" style="left:310.5px;top:358.16px;width:130px;text-align:right;font-size:18px;font-weight:bold;color:#245a8c">16 000</div>
<div class="t" style="left:451px;top:358.16px;width:130px;text-align:right;font-size:18px;font-weight:bold;color:#7f7f7f">14 411</div>
<div class="t" style="left:591.5px;top:358.16px;width:130px;text-align:right;font-size:18px;font-weight:bold;color:#f0401e">+1 588</div>
<div class="t" style="left:731.5px;top:358.16px;width:130px;text-align:right;font-size:18px;font-weight:bold;color:#f0401e"><i class="tu" style="border-bottom-color:#f0401e"></i>11%</div>
<div class="t" style="left:869.5px;top:358.16px;width:130px;text-align:right;font-size:18px;font-weight:bold;color:#245a8c">814</div>
<div class="ab" style="left:31px;top:383.5px;width:982px;height:29.5px;background:#e6e6e6"></div>
<div class="ab" style="left:0px;top:412.0px;width:31px;height:1px;background:#e8e8e8"></div>
<div class="ab" style="left:311px;top:383.5px;width:1px;height:29.5px;background:#b0b0b0"></div>
<svg style="left:8.5px;top:390.5px;" width="14" height="14" viewBox="0 0 14 14"><circle cx="7" cy="6.6" r="6.4" fill="#404040"/><path d="M7 3 V10.2 M3.4 6.6 H10.6" stroke="#fff" stroke-width="1.9"/></svg>
<div class="t" style="left:36.8px;top:389.18px;font-size:16.2px;font-weight:bold;color:#404040">Опер.прибыль компании</div>
<div class="t" style="left:310.5px;top:387.66px;width:130px;text-align:right;font-size:18px;font-weight:bold;color:#245a8c">2 283 475</div>
<div class="t" style="left:451px;top:387.66px;width:130px;text-align:right;font-size:18px;font-weight:bold;color:#7f7f7f">1 063 323</div>
<div class="t" style="left:591.5px;top:387.66px;width:130px;text-align:right;font-size:18px;font-weight:bold;color:#2a6e2a">+1 220 152</div>
<div class="t" style="left:731.5px;top:387.66px;width:130px;text-align:right;font-size:18px;font-weight:bold;color:#2a6e2a"><i class="tu" style="border-bottom-color:#2a6e2a"></i>115%</div>
<div class="t" style="left:869.5px;top:387.66px;width:130px;text-align:right;font-size:18px;font-weight:bold;color:#245a8c">210 134</div>
<div class="ab" style="left:31px;top:413.0px;width:982px;height:29.5px;background:#e6e6e6"></div>
<div class="ab" style="left:0px;top:441.5px;width:31px;height:1px;background:#e8e8e8"></div>
<div class="ab" style="left:311px;top:413.0px;width:1px;height:29.5px;background:#b0b0b0"></div>
<svg style="left:8.5px;top:420.0px;" width="14" height="14" viewBox="0 0 14 14"><circle cx="7" cy="6.6" r="6.4" fill="#404040"/><path d="M7 3 V10.2 M3.4 6.6 H10.6" stroke="#fff" stroke-width="1.9"/></svg>
<div class="t" style="left:36.8px;top:418.68px;font-size:16.2px;font-weight:bold;color:#404040">EBITDA</div>
<div class="t" style="left:310.5px;top:417.16px;width:130px;text-align:right;font-size:18px;font-weight:bold;color:#245a8c">2 283 475</div>
<div class="t" style="left:451px;top:417.16px;width:130px;text-align:right;font-size:18px;font-weight:bold;color:#7f7f7f">1 063 323</div>
<div class="t" style="left:591.5px;top:417.16px;width:130px;text-align:right;font-size:18px;font-weight:bold;color:#2a6e2a">+1 220 152</div>
<div class="t" style="left:731.5px;top:417.16px;width:130px;text-align:right;font-size:18px;font-weight:bold;color:#2a6e2a"><i class="tu" style="border-bottom-color:#2a6e2a"></i>115%</div>
<div class="t" style="left:869.5px;top:417.16px;width:130px;text-align:right;font-size:18px;font-weight:bold;color:#245a8c">210 134</div>
<div class="ab" style="left:31px;top:442.5px;width:982px;height:29.5px;background:#e6e6e6"></div>
<div class="ab" style="left:0px;top:471.0px;width:31px;height:1px;background:#e8e8e8"></div>
<div class="ab" style="left:311px;top:442.5px;width:1px;height:29.5px;background:#b0b0b0"></div>
<svg style="left:8.5px;top:449.5px;" width="14" height="14" viewBox="0 0 14 14"><circle cx="7" cy="6.6" r="6.4" fill="#404040"/><path d="M7 3 V10.2 M3.4 6.6 H10.6" stroke="#fff" stroke-width="1.9"/></svg>
<div class="t" style="left:36.8px;top:448.18px;font-size:16.2px;font-weight:bold;color:#404040">%EBITDA</div>
<div class="t" style="left:310.5px;top:446.66px;width:130px;text-align:right;font-size:18px;font-weight:bold;color:#245a8c">10,25%</div>
<div class="t" style="left:451px;top:446.66px;width:130px;text-align:right;font-size:18px;font-weight:bold;color:#7f7f7f">7,18%</div>
<div class="t" style="left:591.5px;top:446.66px;width:130px;text-align:right;font-size:18px;font-weight:bold;color:#2a6e2a">+3,06%</div>
<div class="t" style="left:731.5px;top:446.66px;width:130px;text-align:right;font-size:18px;font-weight:bold;color:#2a6e2a">+3,06%</div>
<div class="t" style="left:869.5px;top:446.66px;width:130px;text-align:right;font-size:18px;font-weight:bold;color:#245a8c">17,11%</div>
<div class="ab" style="left:31px;top:472.0px;width:982px;height:29.5px;background:#e6e6e6"></div>
<div class="ab" style="left:0px;top:500.5px;width:31px;height:1px;background:#e8e8e8"></div>
<div class="ab" style="left:311px;top:472.0px;width:1px;height:29.5px;background:#b0b0b0"></div>
<svg style="left:8.5px;top:479.0px;" width="14" height="14" viewBox="0 0 14 14"><circle cx="7" cy="6.6" r="6.4" fill="#404040"/><path d="M7 3 V10.2 M3.4 6.6 H10.6" stroke="#fff" stroke-width="1.9"/></svg>
<div class="t" style="left:36.8px;top:477.68px;font-size:16.2px;font-weight:bold;color:#404040">EBIT</div>
<div class="t" style="left:310.5px;top:476.16px;width:130px;text-align:right;font-size:18px;font-weight:bold;color:#245a8c">2 283 475</div>
<div class="t" style="left:451px;top:476.16px;width:130px;text-align:right;font-size:18px;font-weight:bold;color:#7f7f7f">1 063 323</div>
<div class="t" style="left:591.5px;top:476.16px;width:130px;text-align:right;font-size:18px;font-weight:bold;color:#2a6e2a">+1 220 152</div>
<div class="t" style="left:731.5px;top:476.16px;width:130px;text-align:right;font-size:18px;font-weight:bold;color:#2a6e2a"><i class="tu" style="border-bottom-color:#2a6e2a"></i>115%</div>
<div class="t" style="left:869.5px;top:476.16px;width:130px;text-align:right;font-size:18px;font-weight:bold;color:#245a8c">210 134</div>
<div class="ab" style="left:0px;top:530.0px;width:1013px;height:1px;background:#e8e8e8"></div>
<div class="ab" style="left:451.5px;top:501.5px;width:1px;height:29.5px;background:#e8e8e8"></div>
<div class="ab" style="left:592px;top:501.5px;width:1px;height:29.5px;background:#e8e8e8"></div>
<div class="ab" style="left:732.5px;top:501.5px;width:1px;height:29.5px;background:#e8e8e8"></div>
<div class="ab" style="left:872.5px;top:501.5px;width:1px;height:29.5px;background:#e8e8e8"></div>
<div class="ab" style="left:311px;top:501.5px;width:1px;height:29.5px;background:#b0b0b0"></div>
<svg style="left:8.5px;top:508.5px;" width="14" height="14" viewBox="0 0 14 14"><circle cx="7" cy="6.6" r="6.4" fill="#404040"/><path d="M7 3 V10.2 M3.4 6.6 H10.6" stroke="#fff" stroke-width="1.9"/></svg>
<div class="t" style="left:36.8px;top:507.18px;font-size:16.2px;font-weight:bold;color:#404040">%% по кредиту</div>
<div class="t" style="left:310.5px;top:505.66px;width:130px;text-align:right;font-size:18px;font-weight:bold;color:#245a8c">0</div>
<div class="t" style="left:451px;top:505.66px;width:130px;text-align:right;font-size:18px;font-weight:bold;color:#7f7f7f">15 324</div>
<div class="t" style="left:591.5px;top:505.66px;width:130px;text-align:right;font-size:18px;font-weight:bold;color:#f0401e">-15 324</div>
<div class="t" style="left:731.5px;top:505.66px;width:130px;text-align:right;font-size:18px;font-weight:bold;color:#f0401e"><i class="td" style="border-top-color:#f0401e"></i>100%</div>
<div class="t" style="left:869.5px;top:505.66px;width:130px;text-align:right;font-size:18px;font-weight:bold;color:#245a8c">0</div>
<div class="ab" style="left:31px;top:531.0px;width:982px;height:29.5px;background:#e6e6e6"></div>
<div class="ab" style="left:0px;top:559.5px;width:31px;height:1px;background:#e8e8e8"></div>
<div class="ab" style="left:311px;top:531.0px;width:1px;height:29.5px;background:#b0b0b0"></div>
<svg style="left:8.5px;top:538.0px;" width="14" height="14" viewBox="0 0 14 14"><circle cx="7" cy="6.6" r="6.4" fill="#404040"/><path d="M7 3 V10.2 M3.4 6.6 H10.6" stroke="#fff" stroke-width="1.9"/></svg>
<div class="t" style="left:36.8px;top:536.68px;font-size:16.2px;font-weight:bold;color:#404040">EBT</div>
<div class="t" style="left:310.5px;top:535.16px;width:130px;text-align:right;font-size:18px;font-weight:bold;color:#245a8c">2 283 475</div>
<div class="t" style="left:451px;top:535.16px;width:130px;text-align:right;font-size:18px;font-weight:bold;color:#7f7f7f">1 047 999</div>
<div class="t" style="left:591.5px;top:535.16px;width:130px;text-align:right;font-size:18px;font-weight:bold;color:#2a6e2a">+1 235 476</div>
<div class="t" style="left:731.5px;top:535.16px;width:130px;text-align:right;font-size:18px;font-weight:bold;color:#2a6e2a"><i class="tu" style="border-bottom-color:#2a6e2a"></i>118%</div>
<div class="t" style="left:869.5px;top:535.16px;width:130px;text-align:right;font-size:18px;font-weight:bold;color:#245a8c">210 134</div>
<div class="ab" style="left:0px;top:589.0px;width:1013px;height:1px;background:#e8e8e8"></div>
<div class="ab" style="left:451.5px;top:560.5px;width:1px;height:29.5px;background:#e8e8e8"></div>
<div class="ab" style="left:592px;top:560.5px;width:1px;height:29.5px;background:#e8e8e8"></div>
<div class="ab" style="left:732.5px;top:560.5px;width:1px;height:29.5px;background:#e8e8e8"></div>
<div class="ab" style="left:872.5px;top:560.5px;width:1px;height:29.5px;background:#e8e8e8"></div>
<div class="ab" style="left:311px;top:560.5px;width:1px;height:29.5px;background:#b0b0b0"></div>
<svg style="left:8.5px;top:567.5px;" width="14" height="14" viewBox="0 0 14 14"><circle cx="7" cy="6.6" r="6.4" fill="#404040"/><path d="M7 3 V10.2 M3.4 6.6 H10.6" stroke="#fff" stroke-width="1.9"/></svg>
<div class="t" style="left:36.8px;top:566.18px;font-size:16.2px;font-weight:bold;color:#404040">НДС</div>
<div class="t" style="left:310.5px;top:564.66px;width:130px;text-align:right;font-size:18px;font-weight:bold;color:#245a8c">0</div>
<div class="t" style="left:451px;top:564.66px;width:130px;text-align:right;font-size:18px;font-weight:bold;color:#7f7f7f">111 243</div>
<div class="t" style="left:591.5px;top:564.66px;width:130px;text-align:right;font-size:18px;font-weight:bold;color:#f0401e">-111 243</div>
<div class="t" style="left:731.5px;top:564.66px;width:130px;text-align:right;font-size:18px;font-weight:bold;color:#f0401e"><i class="td" style="border-top-color:#f0401e"></i>100%</div>
<div class="t" style="left:869.5px;top:564.66px;width:130px;text-align:right;font-size:18px;font-weight:bold;color:#245a8c">0</div>
<div class="ab" style="left:985px;top:0px;width:28px;height:568px;background:linear-gradient(to right,rgba(0,0,0,0),rgba(0,0,0,0.045))"></div>
<div class="ab" style="left:0px;top:560px;width:1013px;height:8px;background:rgba(255,255,255,0.35)"></div>
<div class="ab" style="left:31px;top:560px;width:982px;height:8px;background:rgba(0,0,0,0.05)"></div>
</div>
<div class="t" style="left:1045px;top:251.70px;font-size:16.3px;font-weight:bold;color:#404040">Выручка - отклонение по отношению к предыдущему году</div>
<svg style="left:0px;top:0px;left:0;top:0" width="1920" height="1080" viewBox="0 0 1920 1080"><path d="M1154 294.5 H1893.5" stroke="#ececec" stroke-width="1.6"/><path d="M1154 404.5 H1893.5" stroke="#ececec" stroke-width="1.6"/><path d="M1154 514.5 H1893.5" stroke="#ececec" stroke-width="1.6"/><path d="M1154 624.5 H1893.5" stroke="#ececec" stroke-width="1.6"/><path d="M1164 294 V634" stroke="#efefef" stroke-width="1.5"/><path d="M1408.5 294 V634" stroke="#efefef" stroke-width="1.5"/><path d="M1529.5 294 V634" stroke="#efefef" stroke-width="1.5"/><path d="M1651.5 294 V634" stroke="#efefef" stroke-width="1.5"/><path d="M1772.5 294 V634" stroke="#efefef" stroke-width="1.5"/><path d="M1893.5 294 V634" stroke="#efefef" stroke-width="1.5"/><path d="M1287 294 V624.5" stroke="#c4c4c4" stroke-width="2"/><path d="M1287 624.5 V634" stroke="#efefef" stroke-width="1.5"/></svg>
<div class="t" style="left:848.5px;top:289.19px;width:300px;text-align:right;font-family:'Liberation Mono';font-size:15.6px;word-spacing:0px;transform:scaleX(0.83);transform-origin:right;color:#595959">+80,0%</div>
<div class="t" style="left:848.5px;top:399.19px;width:300px;text-align:right;font-family:'Liberation Mono';font-size:15.6px;word-spacing:0px;transform:scaleX(0.83);transform-origin:right;color:#595959">+60,0%</div>
<div class="t" style="left:848.5px;top:509.19px;width:300px;text-align:right;font-family:'Liberation Mono';font-size:15.6px;word-spacing:0px;transform:scaleX(0.83);transform-origin:right;color:#595959">+40,0%</div>
<div class="t" style="left:848.5px;top:618.69px;width:300px;text-align:right;font-family:'Liberation Mono';font-size:15.6px;word-spacing:0px;transform:scaleX(0.83);transform-origin:right;color:#595959">+20,0%</div>
<div class="t" style="left:1014.0px;top:647.79px;width:300px;text-align:center;font-family:'Liberation Mono';font-size:15.6px;word-spacing:-1.5px;transform:scaleX(0.83);transform-origin:center;color:#595959">-1 000 000</div>
<div class="t" style="left:1137.0px;top:647.79px;width:300px;text-align:center;font-family:'Liberation Mono';font-size:15.6px;word-spacing:-1.5px;transform:scaleX(0.83);transform-origin:center;color:#595959">0</div>
<div class="t" style="left:1258.5px;top:647.79px;width:300px;text-align:center;font-family:'Liberation Mono';font-size:15.6px;word-spacing:-1.5px;transform:scaleX(0.83);transform-origin:center;color:#595959">1 000 000</div>
<div class="t" style="left:1379.5px;top:647.79px;width:300px;text-align:center;font-family:'Liberation Mono';font-size:15.6px;word-spacing:-1.5px;transform:scaleX(0.83);transform-origin:center;color:#595959">2 000 000</div>
<div class="t" style="left:1501.5px;top:647.79px;width:300px;text-align:center;font-family:'Liberation Mono';font-size:15.6px;word-spacing:-1.5px;transform:scaleX(0.83);transform-origin:center;color:#595959">3 000 000</div>
<div class="t" style="left:1622.5px;top:647.79px;width:300px;text-align:center;font-family:'Liberation Mono';font-size:15.6px;word-spacing:-1.5px;transform:scaleX(0.83);transform-origin:center;color:#595959">4 000 000</div>
<div class="t" style="left:1593.5px;top:647.79px;width:300px;text-align:right;font-family:'Liberation Mono';font-size:15.6px;word-spacing:-1.5px;transform:scaleX(0.83);transform-origin:right;color:#595959">5 000 000</div>
<div class="t" style="left:1405.0px;top:671.19px;width:250px;text-align:center;font-size:17.25px;color:#404040">Текущий период</div>
<div class="t" style="left:1048px;top:452px;width:20px;height:16px;line-height:16px;text-align:center;font-size:15px;color:#595959;transform:rotate(-90deg)">%</div>
<svg style="left:0px;top:0px;left:0;top:0" width="1920" height="1080" viewBox="0 0 1920 1080"><circle cx="1424.5" cy="350.5" r="5.5" fill="#1e6b23"/><path d="M1424.5 337.5 V343.5" stroke="#404040" stroke-width="1.3"/><circle cx="1425.8" cy="383" r="5.5" fill="#1e6b23"/><path d="M1425.8 390 V396" stroke="#404040" stroke-width="1.3"/><circle cx="1844.5" cy="390.8" r="5.5" fill="#1e6b23"/><path d="M1844.5 377.8 V383.8" stroke="#404040" stroke-width="1.3"/><circle cx="1736.7" cy="423.8" r="5.5" fill="#1e6b23"/><circle cx="1733.8" cy="460.5" r="5.5" fill="#1e6b23"/><path d="M1733.8 467.5 V473.5" stroke="#404040" stroke-width="1.3"/><circle cx="1479.2" cy="507.5" r="5.5" fill="#1e6b23"/><path d="M1479.2 494.5 V500.5" stroke="#404040" stroke-width="1.3"/><circle cx="1560.8" cy="500" r="5.5" fill="#1e6b23"/><path d="M1560.8 507 V513" stroke="#404040" stroke-width="1.3"/><circle cx="1435.3" cy="527.2" r="5.5" fill="#1e6b23"/><circle cx="1435.8" cy="542.5" r="5.5" fill="#1e6b23"/><path d="M1435.8 549.5 V555.5" stroke="#404040" stroke-width="1.3"/><circle cx="1500" cy="541.3" r="5.5" fill="#1e6b23"/></svg>
<div class="t" style="left:1224.5px;top:319.61px;width:400px;text-align:center;font-size:17px;color:#404040">Безалкогольные напитки</div>
<div class="t" style="left:1225.8px;top:396.91px;width:400px;text-align:center;font-size:17px;color:#404040">Непродовольственные товары</div>
<div class="t" style="left:1694px;top:360.31px;width:200px;text-align:right;font-size:16.4px;color:#404040">Овощи и ф...</div>
<div class="t" style="left:1533.8px;top:474.41px;width:400px;text-align:center;font-size:17px;color:#404040">Сигареты и аксессуары для курения</div>
<div class="t" style="left:1279.2px;top:476.61px;width:400px;text-align:center;font-size:17px;color:#404040">Гастрономия</div>
<div class="t" style="left:1360.8px;top:513.91px;width:400px;text-align:center;font-size:17px;color:#404040">Молочные продукты</div>
<div class="t" style="left:1235.8px;top:556.41px;width:400px;text-align:center;font-size:17px;color:#404040">Алкогольные напитки</div>
<div class="t" style="left:1045.7px;top:704.43px;font-size:16.5px;font-weight:bold;color:#404040">Выручка Факт/Факт пред.</div>
<svg style="left:0px;top:0px;left:0;top:0" width="1920" height="1080" viewBox="0 0 1920 1080"><path d="M1119 736.5 H1735.5" stroke="#efefef" stroke-width="1.2"/><path d="M1735.5 736 V958" stroke="#f0f0f0" stroke-width="1.2"/><path d="M1129.5 736 V958" stroke="#f2f2f2" stroke-width="1"/><path d="M1119 847.7 H1735.5" stroke="#ececec" stroke-width="1.5"/><path d="M1119 958.5 H1130" stroke="#ececec" stroke-width="1.5"/><rect x="1132.3" y="816.2" width="30.5" height="142.3" fill="#828282"/><rect x="1167.2" y="750.8" width="30.9" height="207.7" fill="#2b5c88"/><rect x="1237.2" y="828.3" width="30.8" height="130.2" fill="#828282"/><rect x="1272" y="755" width="31" height="203.5" fill="#2b5c88"/><path d="M1357.5 950 V958 M1392.5 950 V958" stroke="#595959" stroke-width="1.3"/><path d="M1462.5 950 V958 M1497.5 950 V958" stroke="#595959" stroke-width="1.3"/><path d="M1567.5 950 V958 M1602.5 950 V958" stroke="#595959" stroke-width="1.3"/><path d="M1672.5 950 V958 M1707.5 950 V958" stroke="#595959" stroke-width="1.3"/><path d="M1130 958.5 H1735.5" stroke="#a8a8a8" stroke-width="1.6"/><rect x="1429.5" y="1025" width="306" height="42" fill="#ebebeb"/><rect x="1130.5" y="1025.5" width="299" height="41" fill="#fff" stroke="#a6a6a6" stroke-width="1"/><rect x="1131" y="1039.7" width="15.5" height="27" fill="#828282"/><rect x="1148.2" y="1027.3" width="15.5" height="39.5" fill="#2b5c88"/><rect x="1183.2" y="1042" width="15" height="24.7" fill="#828282"/><rect x="1200.4" y="1028.3" width="15.4" height="38.5" fill="#2b5c88"/><path d="M1130.5 1066.5 H1429.5" stroke="#a6a6a6" stroke-width="1"/><rect x="1746" y="752.3" width="12.7" height="12" fill="#828282"/><rect x="1746" y="779.3" width="12.7" height="12.4" fill="#2b5c88"/></svg>
<div class="t" style="left:813.5px;top:739.07px;width:300px;text-align:right;font-family:'Liberation Mono';font-size:14.5px;word-spacing:0px;transform:scaleX(1.15);transform-origin:right;color:#595959">12M</div>
<div class="t" style="left:813.5px;top:842.17px;width:300px;text-align:right;font-family:'Liberation Mono';font-size:14.5px;word-spacing:0px;transform:scaleX(1.15);transform-origin:right;color:#595959">6M</div>
<div class="t" style="left:814px;top:953.87px;width:300px;text-align:right;font-family:'Liberation Mono';font-size:14.5px;word-spacing:0px;transform:scaleX(0.95);transform-origin:right;color:#595959">0</div>
<div class="t" style="left:1115.0px;top:972.89px;width:100px;text-align:center;font-size:14.3px;color:#595959">янв.</div>
<div class="t" style="left:1220.0px;top:972.89px;width:100px;text-align:center;font-size:14.3px;color:#595959">февр.</div>
<div class="t" style="left:1325.0px;top:972.89px;width:100px;text-align:center;font-size:14.3px;color:#595959">мар.</div>
<div class="t" style="left:1430.0px;top:972.89px;width:100px;text-align:center;font-size:14.3px;color:#595959">апр.</div>
<div class="t" style="left:1535.0px;top:972.89px;width:100px;text-align:center;font-size:14.3px;color:#595959">май.</div>
<div class="t" style="left:1640.0px;top:972.89px;width:100px;text-align:center;font-size:14.3px;color:#595959">июн.</div>
<div class="t" style="left:1358.3px;top:999.09px;width:150px;text-align:center;font-size:16.9px;color:#404040">Месяц</div>
<div class="t" style="left:1769px;top:751.19px;font-size:17.25px;color:#595959">Факт (пред. год)</div>
<div class="t" style="left:1769px;top:778.19px;font-size:17.25px;color:#595959">Факт</div>
<div class="t" style="left:958.2px;top:838.75px;width:200px;height:17.3px;line-height:17.3px;text-align:center;transform:rotate(-90deg);font-size:17.3px;color:#404040">Факт (пред. год), Факт</div>
<div class="t" style="left:1047.6px;top:776.55px;width:200px;height:19.5px;line-height:19.5px;text-align:center;transform:rotate(-90deg) scaleX(0.78);font-family:'Liberation Mono';font-size:19.5px;color:#404040">7,74M</div>
<div class="t" style="left:1082.4px;top:776.25px;width:200px;height:19.5px;line-height:19.5px;text-align:center;transform:rotate(-90deg) scaleX(0.8);font-family:'Liberation Mono';font-size:19.5px;color:#fff">11,26M</div>
<div class="t" style="left:1152px;top:788.95px;width:200px;height:19.5px;line-height:19.5px;text-align:center;transform:rotate(-90deg) scaleX(0.78);font-family:'Liberation Mono';font-size:19.5px;color:#404040">7,07M</div>
<div class="t" style="left:1187px;top:780.05px;width:200px;height:19.5px;line-height:19.5px;text-align:center;transform:rotate(-90deg) scaleX(0.8);font-family:'Liberation Mono';font-size:19.5px;color:#fff">11,03M</div>
</body></html>
